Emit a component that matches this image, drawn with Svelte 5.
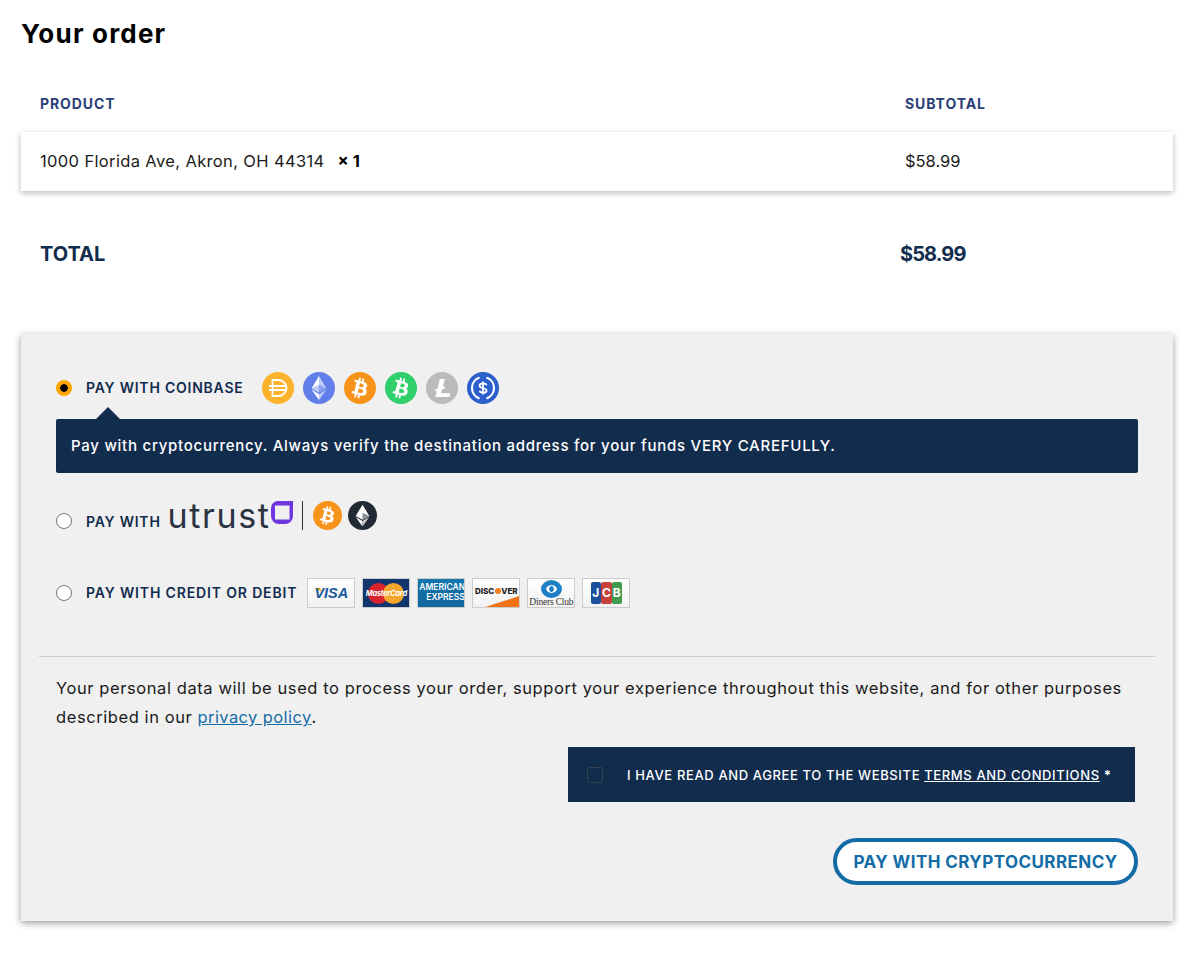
<script>
	const cards = ['visa', 'mc', 'amex', 'discover', 'diners', 'jcb'];
	const btc = 'M23.2 14c.3-2.200-1.400-3.400-3.700-4.200l.8-3-1.800-.5-.7 2.900-1.500-.3.7-2.900-1.800-.5-.8 3-3.600-.9-.5 1.900s1.400.3 1.300.3c.7.2.9.7.8 1.100l-2 8c-.1.2-.3.5-.8.4 0 0-1.300-.3-1.300-.3l-.9 2.100 3.500.9-.8 3 1.800.5.800-3 1.500.4-.8 3 1.800.5.800-3c3.100.6 5.400.3 6.400-2.500.8-2.200 0-3.500-1.600-4.300 1.200-.3 2-1.100 2.300-2.700zm-4 5.700c-.6 2.200-4.300 1-5.500.7l1-3.900c1.200.3 5.100.9 4.500 3.200zm.5-5.700c-.5 2-3.600 1-4.600.7l.9-3.500c1 .2 4.200.7 3.700 2.800z';
</script>

<div class="page">
	<h3>Your order</h3>

	<div class="table-head">
		<span class="col-product">PRODUCT</span>
		<span class="col-sub">SUBTOTAL</span>
	</div>

	<div class="item">
		<span class="col-product">1000 Florida Ave, Akron, OH 44314 <strong class="qty">× 1</strong></span>
		<span class="col-sub">$58.99</span>
	</div>

	<div class="total">
		<span class="col-product">TOTAL</span>
		<span class="col-sub amount">$58.99</span>
	</div>

	<div class="payment">
		<div class="method first">
			<span class="radio checked"></span>
			<span class="label">PAY WITH COINBASE</span>
			<span class="coins">
				<svg viewBox="0 0 32 32" class="coin">
					<circle cx="16" cy="16" r="16" fill="#fbb32d" />
					<path d="M10.500 8h6a8 8 0 0 1 0 16h-6z M7 14h18 M7 18h18" fill="none" stroke="#fff" stroke-width="1.800" />
				</svg>
				<svg viewBox="0 0 32 32" class="coin">
					<circle cx="16" cy="16" r="16" fill="#627eea" />
					<path d="M16 4v9l7.500 3.600z" fill="#fff" fill-opacity=".6" />
					<path d="M16 4 8.500 16.600 16 13z" fill="#fff" />
					<path d="M16 22.200V28l7.500-10.400z" fill="#fff" fill-opacity=".6" />
					<path d="M16 22.200V28L8.500 17.600z" fill="#fff" />
					<path d="M16 20.800l7.500-4.200L16 13z" fill="#fff" fill-opacity=".25" />
					<path d="M8.500 16.600l7.500 4.200V13z" fill="#fff" fill-opacity=".6" />
				</svg>
				<svg viewBox="0 0 32 32" class="coin">
					<circle cx="16" cy="16" r="16" fill="#f7931a" />
					<path d={btc} fill="#fff" />
				</svg>
				<svg viewBox="0 0 32 32" class="coin">
					<circle cx="16" cy="16" r="16" fill="#2fcf6b" />
					<path d={btc} fill="#fff" />
				</svg>
				<svg viewBox="0 0 32 32" class="coin">
					<circle cx="16" cy="16" r="16" fill="#bbb" />
					<path d="M13.800 7h5l-2 8 2.500-1-.7 2.500-2.500 1-1 3.800h9.300l-.9 3.700H9.400l1.600-6.200-2.200.9.600-2.400 2.300-.9z" fill="#fff" />
				</svg>
				<svg viewBox="0 0 32 32" class="coin">
					<circle cx="16" cy="16" r="16" fill="#2b5fcb" />
					<path d="M12.500 5.570A11 11 0 0 0 12.500 26.430M19.500 5.570A11 11 0 0 1 19.500 26.430" fill="none" stroke="#fff" stroke-width="2.200" />
					<path d="M19.500 13.200c-.4-1.200-1.700-1.800-3.500-1.800-2 0-3.400.9-3.400 2.400 0 3.500 7 1.600 7 4.700 0 1.500-1.500 2.300-3.500 2.300-1.800 0-3.100-.7-3.500-2M16 9.500v13" fill="none" stroke="#fff" stroke-width="1.800" />
				</svg>
			</span>
		</div>
		<div class="notice">Pay with cryptocurrency. Always verify the destination address for your funds VERY CAREFULLY.</div>

		<div class="method utrust-row">
			<span class="radio"></span>
			<span class="label">PAY WITH</span>
			<span class="utrust">
				<span class="wordmark">utrust</span>
				<svg viewBox="0 0 22 23" class="utrust-mark">
					<path d="M7 0H22V15a8 8 0 0 1-8 8H8a8 8 0 0 1-8-8V7a7 7 0 0 1 7-7zM4 4.500V18.500H18.500V4.500z" fill="#6f36e0" fill-rule="evenodd" />
				</svg>
				<span class="divider"></span>
				<svg viewBox="0 0 32 32" class="coin small">
					<circle cx="16" cy="16" r="16" fill="#f7931a" />
					<path d={btc} fill="#fff" />
				</svg>
				<svg viewBox="0 0 32 32" class="coin small">
					<circle cx="16" cy="16" r="16" fill="#222a35" />
					<path d="M16 4 8.500 16.600 16 20.800l7.500-4.200z" fill="#fff" />
					<path d="M16 13l7.500 3.600L16 20.800z" fill="#8a8f96" />
					<path d="M16 22.200V28L8.500 17.600z" fill="#fff" />
					<path d="M16 22.200V28l7.500-10.400z" fill="#ccc" />
				</svg>
			</span>
		</div>

		<div class="method card-row">
			<span class="radio"></span>
			<span class="label">PAY WITH CREDIT OR DEBIT</span>
			<span class="cards">
				{#each cards as card}
					<span class="card {card}">
						{#if card === 'visa'}
							<span class="flag"></span>
							<i>VISA</i>
						{:else if card === 'mc'}
							<span class="disc red"></span>
							<span class="disc amber"></span>
							<em>MasterCard</em>
						{:else if card === 'amex'}
							<em class="am">AMERICAN</em>
							<em class="ex">EXPRESS</em>
						{:else if card === 'discover'}
							<em>DISC<b></b>VER</em>
							<span class="swoosh"></span>
						{:else if card === 'diners'}
							<span class="ring"></span>
							<em>Diners Club</em>
						{:else}
							<span class="bar blue">J</span>
							<span class="bar red">C</span>
							<span class="bar green">B</span>
						{/if}
					</span>
				{/each}
			</span>
		</div>

		<hr />

		<p class="privacy">
			Your personal data will be used to process your order, support your experience throughout this website, and for other purposes described in our <a href="#privacy">privacy policy</a>.
		</p>

		<div class="terms-wrap">
			<div class="terms">
				<span class="check"></span>
				<span>I HAVE READ AND AGREE TO THE WEBSITE <a href="#terms">TERMS AND CONDITIONS</a> <b>*</b></span>
			</div>
		</div>

		<div class="actions">
			<button>PAY WITH CRYPTOCURRENCY</button>
		</div>
	</div>
</div>

<style>
	:global(body) {
		margin: 0;
		background: #fff;
		font-family: "Inter", "Liberation Sans", sans-serif;
		color: #000;
	}

	.page {
		padding: 0 25px 0 21px;
		height: 960px;
		box-sizing: border-box;
		overflow: hidden;
	}

	h3 {
		margin: 0;
		padding-top: 16px;
		font-size: 26px;
		line-height: 36px;
		font-weight: 700;
		letter-spacing: 1.2px;
	}

	.table-head,
	.item,
	.total {
		display: flex;
		padding-left: 19px;
	}

	.col-product {
		width: 865px;
		flex: none;
	}

	.table-head {
		margin: 29px 0 7px;
		height: 44px;
		align-items: center;
		font-size: 14px;
		font-weight: 700;
		letter-spacing: 0.9px;
		color: #2a4079;
	}

	.item {
		height: 59px;
		align-items: center;
		background: #fff;
		box-shadow: 0 2px 6px rgba(0, 0, 0, 0.28);
		font-size: 16.500px;
		color: #1a1a1a;
	}

	.item span {
		margin-bottom: 2px;
	}

	.item .col-product {
		letter-spacing: 0.36px;
	}

	.qty {
		margin-left: 8px;
		color: #000;
		letter-spacing: 0;
	}

	.total {
		margin-top: 35px;
		height: 56px;
		align-items: center;
		font-size: 20px;
		font-weight: 700;
		color: #122c4e;
	}

	.amount {
		margin-left: -5px;
		letter-spacing: -0.9px;
	}

	.payment {
		margin-top: 52px;
		height: 587px;
		padding: 0 18px;
		box-sizing: border-box;
		background: #f0f0f0;
		box-shadow: 0 2px 7px rgba(0, 0, 0, 0.4);
	}

	.method {
		display: flex;
		align-items: center;
		padding-left: 17px;
	}

	.first {
		padding-top: 38px;
		height: 32px;
	}

	.label {
		margin-left: 14px;
		font-size: 14px;
		font-weight: 600;
		letter-spacing: 0.78px;
		color: #122c4e;
		white-space: nowrap;
	}

	.first .label,
	.card-row .label {
		margin-bottom: 2px;
	}

	.card-row .label {
		letter-spacing: 0.85px;
	}

	.radio {
		width: 16px;
		height: 16px;
		box-sizing: border-box;
		border-radius: 50%;
		border: 1px solid #767676;
		background: #fff;
		flex: none;
	}

	.radio.checked {
		border: 0;
		background: radial-gradient(circle, #000 0 3.500px, #ffa700 4px);
	}

	.coins {
		display: flex;
		gap: 9px;
		margin-left: 18px;
	}

	.coin {
		width: 32px;
		height: 32px;
		display: block;
		flex: none;
	}

	.coin.small {
		width: 29px;
		height: 29px;
	}

	.notice {
		position: relative;
		margin: 15px 0 0 17px;
		width: 1082px;
		padding: 0 15px;
		height: 54px;
		line-height: 53px;
		box-sizing: border-box;
		border-radius: 2px;
		background: #122c4e;
		color: #fff;
		font-size: 15px;
		font-weight: 500;
		letter-spacing: 0.74px;
		white-space: nowrap;
	}

	.notice::before {
		content: "";
		position: absolute;
		left: 40px;
		top: -12px;
		border: 12px solid transparent;
		border-top: 0;
		border-bottom-color: #122c4e;
	}

	.utrust-row {
		margin-top: 24px;
		height: 48px;
	}

	.utrust {
		display: flex;
		align-items: flex-start;
		margin-left: 7px;
		height: 40px;
	}

	.wordmark {
		font-size: 34px;
		font-weight: 400;
		color: #2b3342;
		letter-spacing: 1.6px;
		line-height: 40px;
		margin-top: -5px;
	}

	.utrust-mark {
		width: 22px;
		height: 23px;
		margin-left: 1px;
		flex: none;
	}

	.divider {
		width: 1px;
		height: 29px;
		background: #333;
		margin: 0 10px 0 9px;
	}

	.utrust .coin + .coin {
		margin-left: 6px;
	}

	.card-row {
		margin-top: 33px;
		height: 30px;
	}

	.cards {
		display: flex;
		gap: 7px;
		margin-left: 10px;
	}

	.card {
		position: relative;
		width: 48px;
		height: 30px;
		box-sizing: border-box;
		border: 1px solid #ccc;
		background: linear-gradient(#fff, #f1f1f1);
		overflow: hidden;
		display: flex;
		align-items: center;
		justify-content: center;
		font-size: 8px;
	}

	.card em {
		font-style: normal;
		position: relative;
	}

	.visa i {
		position: relative;
		font-family: "Liberation Sans", sans-serif;
		font-weight: 700;
		font-size: 14.500px;
		color: #1a5a9c;
	}

	.flag {
		position: absolute;
		left: 6px;
		top: 9px;
		width: 8px;
		height: 4px;
		background: #f2ae14;
		clip-path: polygon(0 0, 70% 0, 100% 100%);
	}

	.mc {
		background: #12356e;
	}

	.disc {
		position: absolute;
		top: 4px;
		width: 21px;
		height: 21px;
		border-radius: 50%;
	}

	.disc.red {
		left: 5px;
		background: #d9232e;
	}

	.disc.amber {
		right: 5px;
		background: #f4a62a;
	}

	.mc em {
		color: #fff;
		font-size: 7.500px;
		font-weight: 700;
		font-style: italic;
		letter-spacing: -0.3px;
	}

	.amex {
		background: linear-gradient(#1676ae, #10659c);
		display: block;
	}

	.amex em {
		display: block;
		color: #fff;
		font-size: 8.500px;
		line-height: 10px;
		font-weight: 600;
		white-space: nowrap;
	}

	.am {
		margin: 3px 0 0 1px;
	}

	.ex {
		margin-left: 8px;
	}

	.discover em {
		font-size: 8px;
		font-weight: 800;
		color: #222;
		margin-top: -5px;
		white-space: nowrap;
	}

	.discover b {
		display: inline-block;
		width: 6px;
		height: 6px;
		margin: 0 0.5px;
		border-radius: 50%;
		background: #f47c20;
	}

	.swoosh {
		position: absolute;
		right: 0;
		bottom: 0;
		width: 34px;
		height: 11px;
		background: #f47216;
		clip-path: polygon(100% 0, 100% 100%, 0 100%);
	}

	.ring {
		position: absolute;
		left: 13px;
		top: 1px;
		width: 21px;
		height: 18px;
		box-sizing: border-box;
		border: 5px solid #1f7fc4;
		border-radius: 50%;
		background: #1f7fc4;
		box-shadow: inset 3px 0 0 #fff, inset -3px 0 0 #fff;
	}

	.diners em {
		font-family: "Liberation Serif", serif;
		font-size: 9.500px;
		letter-spacing: -0.2px;
		color: #333;
		margin-top: 18px;
		white-space: nowrap;
	}

	.jcb {
		gap: 0;
	}

	.bar {
		width: 10.500px;
		height: 22px;
		border-radius: 2px;
		color: #fff;
		font-size: 12px;
		font-weight: 700;
		line-height: 22px;
		text-align: center;
	}

	.bar.blue {
		background: #1c4f9c;
	}

	.bar.red {
		background: #c8423c;
	}

	.bar.green {
		background: #3f9c4f;
	}

	hr {
		margin: 48px 0 0;
		border: 0;
		border-top: 1px solid #ccc;
	}

	.privacy {
		margin: 17px 17px 0;
		font-size: 16.500px;
		line-height: 29px;
		letter-spacing: 0.58px;
		color: #1a1a1a;
	}

	.privacy a {
		color: #146ca6;
		letter-spacing: 0.4px;
	}

	.terms-wrap {
		display: flex;
		justify-content: flex-end;
		margin-top: 15px;
		padding-right: 20px;
	}

	.terms {
		width: 567px;
		height: 55px;
		box-sizing: border-box;
		padding-left: 19px;
		display: flex;
		align-items: center;
		gap: 24px;
		background: #122c4e;
		color: #fff;
		font-size: 13px;
		font-weight: 500;
		letter-spacing: 0.63px;
		white-space: nowrap;
	}

	.terms a {
		color: #fff;
	}

	.check {
		width: 14px;
		height: 14px;
		border: 1px solid #34404f;
		border-radius: 2px;
		flex: none;
	}

	.actions {
		display: flex;
		justify-content: flex-end;
		margin-top: 36px;
		padding-right: 17px;
	}

	button {
		width: 305px;
		height: 47px;
		box-sizing: border-box;
		border: 4px solid #146ca6;
		border-radius: 24px;
		background: #fff;
		color: #146ca6;
		font: 700 17px "Inter", "Liberation Sans", sans-serif;
		letter-spacing: 0.43px;
		padding: 0;
	}
</style>
